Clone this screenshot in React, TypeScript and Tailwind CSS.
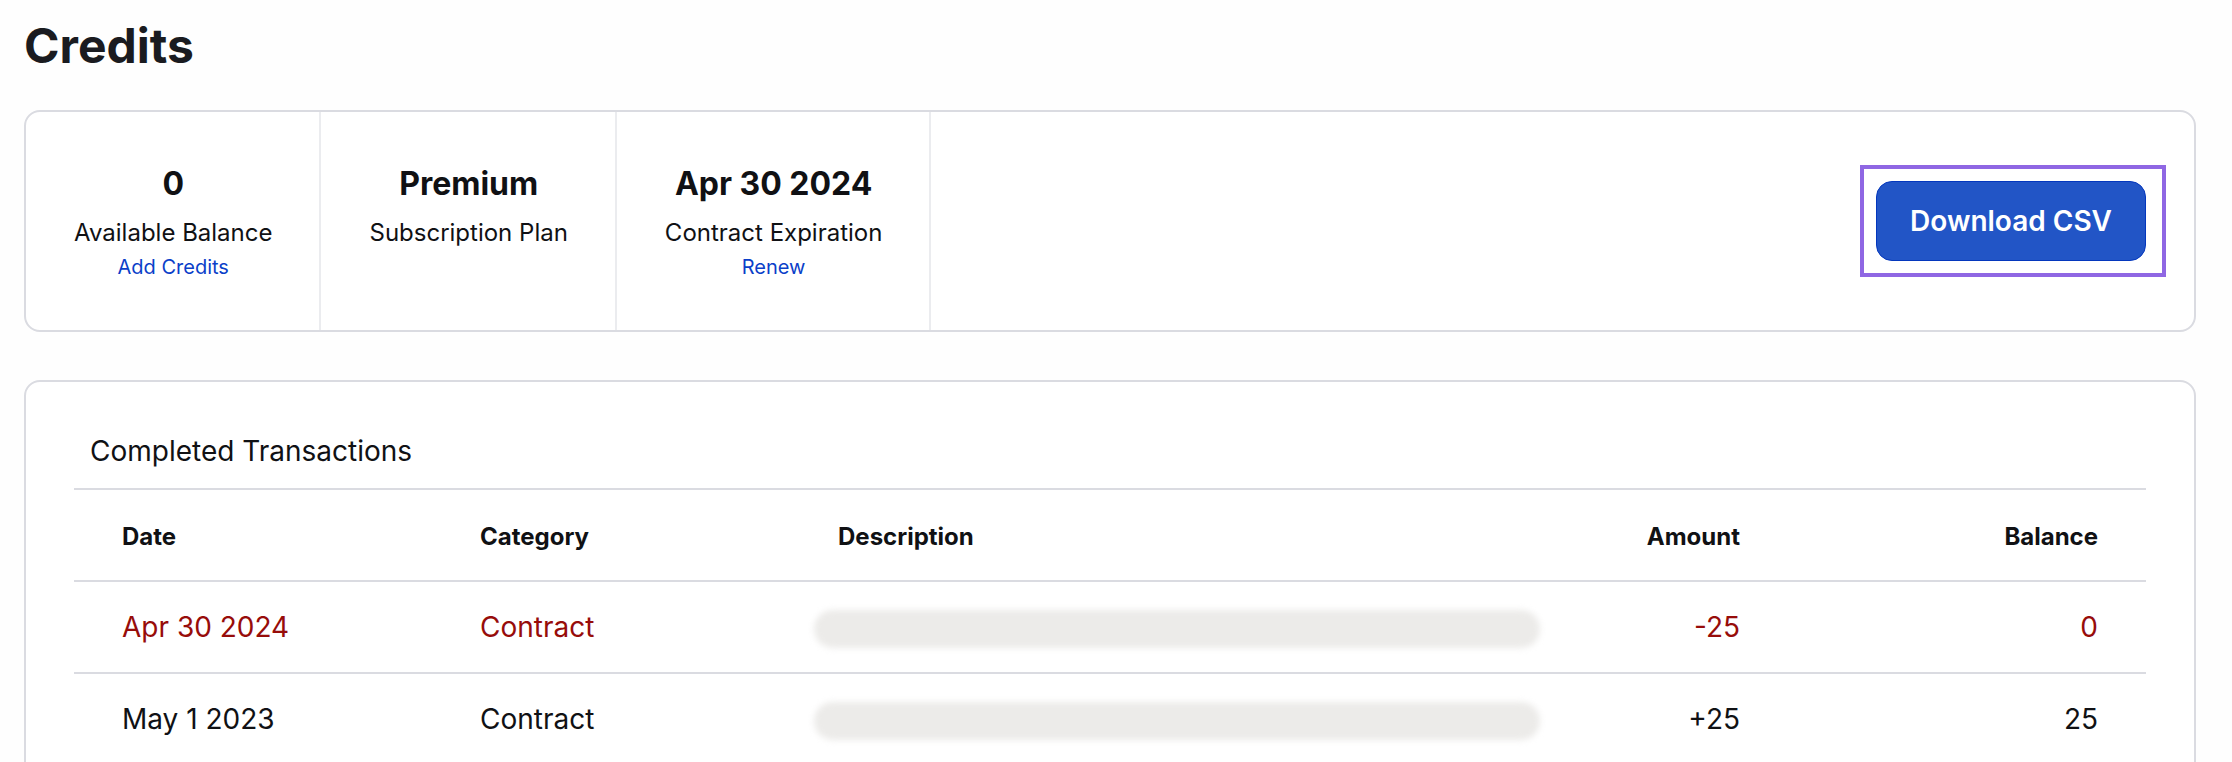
type Stat = { value: string; label: string; link?: string };

type Transaction = {
  date: string;
  category: string;
  amount: string;
  balance: string;
  expired?: boolean;
};

const stats: Stat[] = [
  { value: "0", label: "Available Balance", link: "Add Credits" },
  { value: "Premium", label: "Subscription Plan" },
  { value: "Apr 30 2024", label: "Contract Expiration", link: "Renew" },
];

const transactions: Transaction[] = [
  { date: "Apr 30 2024", category: "Contract", amount: "-25", balance: "0", expired: true },
  { date: "May 1 2023", category: "Contract", amount: "+25", balance: "25" },
];

function StatCell({ value, label, link }: Stat) {
  return (
    <div className="border-r-2 border-[#ebecef] pt-12 pr-[47px] pb-[46px] pl-12 text-center">
      <p className="text-[32px] leading-[48px] font-bold">{value}</p>
      <p className="mt-2 text-[24px] leading-[34px]">{label}</p>
      {link && (
        <a href="#" className="block text-[20px] leading-[34px] text-[#0b3fc9]">
          {link}
        </a>
      )}
    </div>
  );
}

function Summary() {
  return (
    <section className="flex rounded-2xl border-2 border-[#dadbe1] bg-white">
      {stats.map((stat) => (
        <StatCell key={stat.label} {...stat} />
      ))}
      <div className="mr-7 ml-auto self-center border-4 border-[#8f67e3] py-3 pr-4 pl-3">
        <button
          type="button"
          className="block h-20 rounded-2xl border border-[#0437bd] bg-[#2255c6] px-[33px] text-[28px] leading-10 font-semibold whitespace-nowrap text-white"
        >
          Download CSV
        </button>
      </div>
    </section>
  );
}

function TransactionRow({ date, category, amount, balance, expired }: Transaction) {
  return (
    <tr className={expired ? "text-[#970c0a]" : ""}>
      <td className="h-[92px] border-t-2 border-[#dadbe1] px-12">{date}</td>
      <td className="border-t-2 border-[#dadbe1] px-12">{category}</td>
      <td className="border-t-2 border-[#dadbe1] pt-1 pr-7 pl-6">
        <div className="h-[38px] rounded-[20px] bg-[#ecebe9] blur-[3px]" />
      </td>
      <td className="border-t-2 border-[#dadbe1] pr-12 text-right">{amount}</td>
      <td className="border-t-2 border-[#dadbe1] pr-12 text-right">{balance}</td>
    </tr>
  );
}

function Transactions() {
  return (
    <section className="mt-12 rounded-2xl border-2 border-[#dadbe1] bg-white px-12 py-12">
      <h2 id="completed" className="px-4 pb-4 text-[28px] leading-[42px]">
        Completed Transactions
      </h2>
      <table
        aria-labelledby="completed"
        className="w-full table-fixed border-separate border-spacing-0 text-[28px] leading-10"
      >
        <thead>
          <tr className="text-left text-[24px]">
            <th className="h-[92px] w-[358px] border-t-2 border-[#dadbe1] px-12 pt-1 font-bold">Date</th>
            <th className="w-[358px] border-t-2 border-[#dadbe1] px-12 pt-1 font-bold">Category</th>
            <th className="border-t-2 border-[#dadbe1] px-12 pt-1 font-bold">Description</th>
            <th className="w-[220px] border-t-2 border-[#dadbe1] pt-1 pr-12 text-right font-bold">Amount</th>
            <th className="w-[358px] border-t-2 border-[#dadbe1] pt-1 pr-12 text-right font-bold">Balance</th>
          </tr>
        </thead>
        <tbody>
          {transactions.map((row) => (
            <TransactionRow key={row.date} {...row} />
          ))}
        </tbody>
      </table>
    </section>
  );
}

export default function App() {
  return (
    <main className="max-h-screen overflow-hidden bg-[#fefefe] pt-4 pr-9 pl-6 font-['Inter',sans-serif] text-[#101114]">
      <h1 className="mb-[34px] text-[48px] leading-[60px] font-bold text-[#1a1b20]">Credits</h1>
      <Summary />
      <Transactions />
    </main>
  );
}
